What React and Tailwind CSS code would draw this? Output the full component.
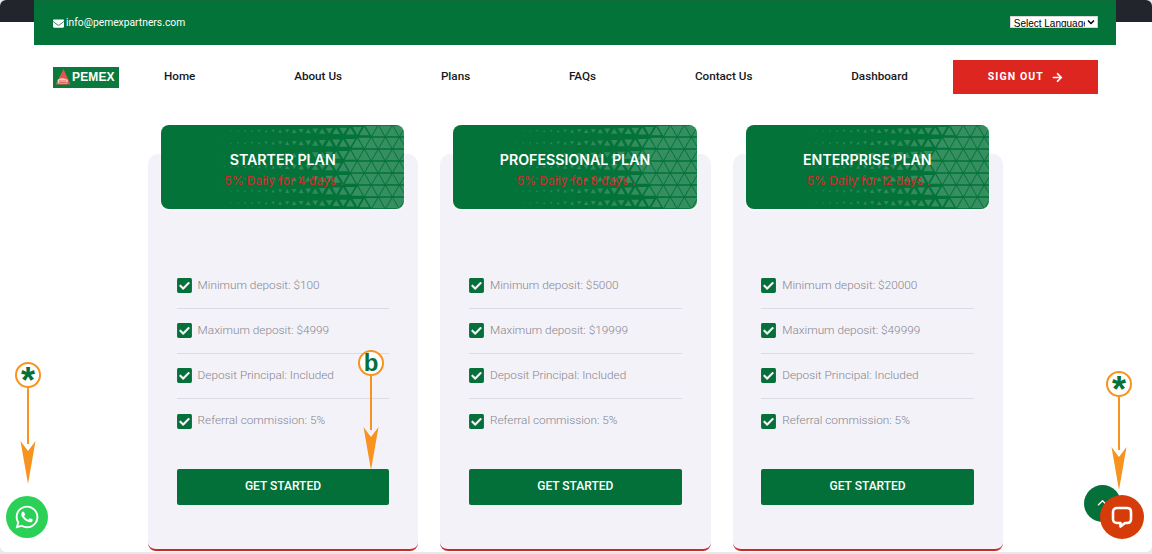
import React from 'react';
import { FaArrowRight, FaCheckSquare, FaEnvelope, FaWhatsapp } from 'react-icons/fa';
import { FaChevronUp } from 'react-icons/fa6';

const navLinks = ['Home', 'About Us', 'Plans', 'FAQs', 'Contact Us', 'Dashboard'];

const plans = [
  { name: 'STARTER PLAN', days: 4, min: 100, max: 4999 },
  { name: 'PROFESSIONAL PLAN', days: 8, min: 5000, max: 19999 },
  { name: 'ENTERPRISE PLAN', days: 12, min: 20000, max: 49999 },
];

// triangles shrink with the distance from the right edge, ending in tiny specks
const TrianglePattern = () => {
  const cells = [];
  const w = 14;
  const h = 12;
  for (let row = 0; row < 8; row++) {
    for (let col = 0; col < 38; col++) {
      const x = col * (w / 2) + (row % 2 ? w / 2 : 0);
      const y = row * h;
      const up = col % 2 === 0;
      const cx = x + w / 2;
      const cy = y + h / 2;
      const d = Math.hypot(248 - cx, (42 - cy) * 1.3);
      if (d > 190) continue;
      const t = Math.min(1, Math.max(0, (d - 60) / 130));
      const s = 0.86 - Math.sqrt(t) * 0.76;
      const pts = (up
        ? [[cx, cy - (h / 2) * s], [cx + (w / 2) * s, cy + (h / 2) * s], [cx - (w / 2) * s, cy + (h / 2) * s]]
        : [[cx, cy + (h / 2) * s], [cx + (w / 2) * s, cy - (h / 2) * s], [cx - (w / 2) * s, cy - (h / 2) * s]]
      ).map((p) => p.join(',')).join(' ');
      cells.push(<polygon key={`${row}-${col}`} points={pts} fill="#fff" opacity={0.2 - t * 0.08} />);
    }
  }
  return (
    <svg className="absolute inset-0 h-full w-full" viewBox="0 0 243 84" preserveAspectRatio="none" aria-hidden="true">
      {cells}
    </svg>
  );
};

const PemexLogo = () => (
  <div className="flex h-[21px] w-[66px] items-center gap-[1px] bg-[#0a7a3c] pl-[2px]">
    <svg width="16" height="17" viewBox="0 0 16 17" aria-hidden="true">
      <path d="M8.5 0 L15.5 15.5 L.5 15.5 L4 9 Z" fill="#e2574c" />
      <path d="M2.5 11 C5 8.5 9 8.5 13 11 L12 14.5 L3 14.5 Z" fill="#f6c7c0" />
      <path d="M4 12 L11.5 12 M4 13.5 L11.5 13.5" stroke="#d9443a" strokeWidth="0.7" />
    </svg>
    <span className="font-['Liberation_Sans',sans-serif] text-[12px] leading-none font-bold tracking-[0.15px] text-white">PEMEX</span>
  </div>
);

const PlanRow = ({ label, last }) => (
  <li className={`flex h-[45px] items-center gap-[5px] border-[#dcdae2] pb-[1px] ${last ? '' : 'border-b'}`}>
    <FaCheckSquare className="-ml-px h-[17px] w-[17px] text-[#05703a]" />
    <span className="text-[11.8px] font-light text-[#85858c]">{label}</span>
  </li>
);

const PlanCard = ({ plan }) => (
  <div className="flex h-[397px] flex-col rounded-t-[10px] rounded-b-[8px] border-b-2 border-[#c92a2a] bg-[#f4f2f9] pr-[14px] pl-[13px]">
    <div className="relative -mt-[29px] h-[84px] shrink-0 overflow-hidden rounded-[8px] bg-[#04733a] shadow-[0_1px_2px_rgba(255,255,255,0.9)]">
      <TrianglePattern />
      <div className="relative flex h-full flex-col items-center pt-[26px]">
        <h3 className="font-['Inter',sans-serif] text-[14.2px] leading-[18px] font-semibold text-white">{plan.name}</h3>
        <p className="mt-[4px] ml-[2px] font-['Inter',sans-serif] text-[12px] leading-[15px] font-medium text-[#c1302a]">5% Daily for {plan.days} days .</p>
      </div>
    </div>
    <ul className="mt-[55px] mr-[15px] ml-[15.6px]">
      <PlanRow label={`Minimum deposit: $${plan.min}`} />
      <PlanRow label={`Maximum deposit: $${plan.max}`} />
      <PlanRow label="Deposit Principal: Included" />
      <PlanRow label="Referral commission: 5%" last />
    </ul>
    <button className="mt-[25px] mr-[15px] ml-[15.6px] h-[36px] rounded-[2px] bg-[#03703a] pb-[2px] text-[12px] font-medium text-white">GET STARTED</button>
  </div>
);

// orange callout: circled letter with a long arrow pointing down
const Callout = ({ letter, className, length }) => (
  <div className={`absolute flex w-[26px] flex-col items-center ${className}`}>
    <div className="flex h-[26px] w-[26px] items-center justify-center rounded-full border-2 border-[#f7931e] bg-white font-['Liberation_Sans_Narrow','Liberation_Sans',sans-serif] leading-none font-bold text-[#05703a]">
      {letter === '*'
        ? <span className="mt-[11px] font-['Liberation_Sans',sans-serif] text-[36px]">*</span>
        : <span className="text-[24px]">{letter}</span>}
    </div>
    <svg width="18" height={length} viewBox={`0 0 18 ${length}`} aria-hidden="true">
      <rect x="8" y="0" width="2" height={length - 40} fill="#f7931e" />
      <path d={`M1.5 ${length - 43} L9 ${length - 33} L16.5 ${length - 43} L9 ${length} Z`} fill="#f7931e" />
    </svg>
  </div>
);

const App = () => {
  return (
    <div className="relative h-[554px] w-[1152px] overflow-hidden bg-[#e9e9ec] font-['Roboto',sans-serif]">
      <div className="absolute inset-x-0 top-0 h-[22px] rounded-t-[6px] bg-[#22252b]" />
      <div className="h-[552px] rounded-[6px] bg-white">
        {/* Top bar */}
        <div className="relative ml-[34px] flex h-[45px] w-[1082px] overflow-hidden border-t border-[#0f6b38] bg-[#04733a] pr-[18px] pl-[19px] text-white">
          <div className="flex h-[44px] items-center gap-[2px]">
            <FaEnvelope className="h-[11px] w-[11px]" />
            <span className="text-[10.3px] leading-none">info@pemexpartners.com</span>
          </div>
          <div className="ml-auto flex w-[88px] flex-col pt-[15px]">
            {/* the reference is a scaled down page, so the native select is scaled too */}
            <select className="h-[16px] w-[117px] shrink-0 origin-top-left scale-75 border border-[#ccc] bg-white p-0 font-['Liberation_Sans',sans-serif] text-[13.33px] leading-none text-black">
              <option>Select Language</option>
            </select>
            <span className="mt-[11px] text-[10px] leading-[14px] text-[#1f4a33]">Powered by</span>
          </div>
        </div>

        {/* Nav */}
        <nav className="mx-[34px] flex h-[64px] items-center pl-[19px]">
          <PemexLogo />
          <div className="ml-[45px] flex gap-[98.8px]">
            {navLinks.map((link) => (
              <a key={link} className="text-[11.7px] leading-none font-medium whitespace-nowrap text-[#16181c]">{link}</a>
            ))}
          </div>
          <button className="ml-[45px] flex h-[34px] w-[145px] items-center justify-center gap-[8px] bg-[#de2620] text-[10.5px] font-bold tracking-[1.1px] text-white">
            SIGN OUT <FaArrowRight className="h-[11px] w-[11px]" />
          </button>
        </nav>

        {/* Plans */}
        <div className="mt-[45px] ml-[148px] grid w-[855px] grid-cols-3 gap-[22px]">
          {plans.map((plan) => (
            <PlanCard key={plan.name} plan={plan} />
          ))}
        </div>
      </div>

      {/* Floating buttons */}
      <a className="absolute top-[496px] left-[6px] flex h-[42px] w-[42px] items-center justify-center rounded-full bg-[#2bd157] text-white">
        <FaWhatsapp className="h-[26px] w-[26px]" />
      </a>
      <a className="absolute top-[485px] left-[1084px] flex h-[37px] w-[37px] items-center justify-center rounded-full bg-[#05703a] text-white">
        <FaChevronUp className="h-[11px] w-[11px]" />
      </a>
      <a className="absolute top-[495px] left-[1100px] flex h-[44px] w-[44px] items-center justify-center rounded-full bg-[#d63c0a]">
        <svg width="22" height="23" viewBox="0 0 22 23" fill="none" aria-hidden="true">
          <path d="M6 2 H16 C18.5 2 20 3.5 20 6 V13 C20 15.5 18.5 17 16 17 H14 L9.5 20.5 V17 H6 C3.5 17 2 15.5 2 13 V6 C2 3.5 3.5 2 6 2 Z" stroke="#fff" strokeWidth="2.6" strokeLinejoin="round" />
        </svg>
      </a>

      {/* Callouts */}
      <Callout letter="*" className="top-[362px] left-[15px]" length={96} />
      <Callout letter="b" className="top-[350px] left-[358px]" length={94} />
      <Callout letter="*" className="top-[371px] left-[1106px]" length={93} />
    </div>
  );
};

export default App;
